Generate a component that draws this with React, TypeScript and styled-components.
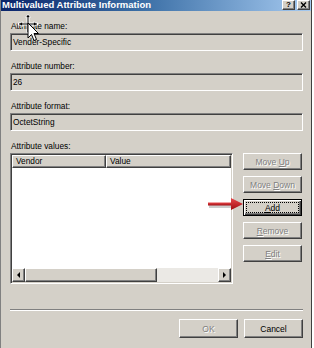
import styled, { createGlobalStyle, css } from "styled-components";

const GlobalStyle = createGlobalStyle`
  html, body {
    margin: 0;
    padding: 0;
    background: #fff;
    overflow: hidden;
  }
`;

const raised = css`
  border: 1px solid;
  border-color: #fff #404040 #404040 #fff;
  box-shadow: inset -1px -1px #808080;
`;

const sunken = css`
  border: 1px solid;
  border-color: #808080 #fff #fff #808080;
  box-shadow: inset 1px 1px #404040, inset -1px -1px #d4d0c8;
`;

const Window = styled.div`
  position: relative;
  width: 312px;
  height: 348px;
  box-sizing: border-box;
  background: #d4d0c8;
  border-left: 1px solid #808080;
  border-right: 1px solid #404040;
  display: flex;
  flex-direction: column;
  font-family: "Liberation Sans", Arial, sans-serif;
  font-size: 8.3px;
  color: #000;
`;

const TitleBar = styled.div`
  height: 11px;
  display: flex;
  align-items: flex-start;
  justify-content: space-between;
  background: linear-gradient(to right, #0a246a, #3a6ea5 45%, #a6caf0);
  padding: 0 1px 0 1px;
`;

const Title = styled.span`
  color: #fff;
  font-weight: bold;
  font-size: 9.5px;
  line-height: 10px;
  white-space: nowrap;
`;

const TitleButtons = styled.div`
  display: flex;
  gap: 2px;
`;

const TitleButton = styled.div`
  width: 13px;
  height: 10px;
  box-sizing: border-box;
  background: #d4d0c8;
  ${raised};
  display: flex;
  align-items: center;
  justify-content: center;
  font-weight: bold;
  font-size: 8px;
  line-height: 8px;
`;

const Body = styled.div`
  flex: 1;
  display: flex;
  flex-direction: column;
  padding: 10px 8px 0 9px;
`;

const Field = styled.div`
  display: flex;
  flex-direction: column;
  margin-bottom: 10px;
`;

const Label = styled.div`
  line-height: 10px;
  height: 10px;
  padding-left: 1px;
  margin-bottom: 2px;
  white-space: nowrap;
`;

const ReadOnlyBox = styled.div`
  height: 18px;
  box-sizing: border-box;
  ${sunken};
  padding-left: 2px;
  display: flex;
  align-items: center;
  background: #d4d0c8;
`;

const ValuesRow = styled.div`
  display: flex;
  gap: 10px;
  height: 131px;
`;

const ListView = styled.div`
  width: 223px;
  box-sizing: border-box;
  ${sunken};
  background: #fff;
  display: flex;
  flex-direction: column;
  padding: 1px;
`;

const ListHeader = styled.div`
  display: flex;
  height: 13px;
`;

const HeaderCell = styled.div<{ $width?: number }>`
  ${({ $width }) => ($width ? `width: ${$width}px;` : "flex: 1;")}
  box-sizing: border-box;
  background: #d4d0c8;
  ${raised};
  padding-left: 3px;
  line-height: 11px;
`;

const ListBody = styled.div`
  flex: 1;
  background: #fff;
`;

const ScrollBar = styled.div`
  height: 14px;
  display: flex;
  background: #ebe9e5;
`;

const ScrollButton = styled.div`
  width: 13px;
  box-sizing: border-box;
  background: #d4d0c8;
  ${raised};
  display: flex;
  align-items: center;
  justify-content: center;
`;

const Thumb = styled.div<{ $width: number }>`
  width: ${({ $width }) => $width}px;
  box-sizing: border-box;
  background: #d4d0c8;
  ${raised};
`;

const Track = styled.div`
  flex: 1;
`;

const Triangle = styled.div<{ $dir: "left" | "right" }>`
  width: 0;
  height: 0;
  border-top: 3px solid transparent;
  border-bottom: 3px solid transparent;
  ${({ $dir }) =>
    $dir === "left"
      ? "border-right: 3px solid #000;"
      : "border-left: 3px solid #000;"}
`;

const ButtonColumn = styled.div`
  width: 59px;
  display: flex;
  flex-direction: column;
  gap: 6px;
`;

const Button = styled.div<{ $disabled?: boolean; $default?: boolean; $height?: number }>`
  height: ${({ $height }) => $height ?? 17}px;
  width: 59px;
  box-sizing: border-box;
  background: #d4d0c8;
  display: flex;
  align-items: center;
  justify-content: center;
  font-size: 8.5px;
  white-space: pre;
  ${({ $default }) =>
    $default
      ? css`
          border: 1px solid #000;
          box-shadow: inset 1px 1px #fff, inset -1px -1px #404040,
            inset -2px -2px #808080;
          padding: 2px;
        `
      : raised};
  ${({ $disabled }) =>
    $disabled &&
    css`
      color: #808080;
      text-shadow: 1px 1px #fff;
    `}
`;

const Caption = styled.span`
  white-space: pre;
`;

const FocusRect = styled.span`
  flex: 1;
  align-self: stretch;
  display: flex;
  align-items: center;
  justify-content: center;
  border: 1px dotted #000;
`;

const Separator = styled.div`
  margin-top: 25px;
  border-top: 1px solid #808080;
  border-bottom: 1px solid #fff;
`;

const Footer = styled.div`
  display: flex;
  justify-content: flex-end;
  gap: 6px;
  margin-top: 8px;
`;

const Overlay = styled.svg<{ $left: number; $top: number }>`
  position: absolute;
  left: ${({ $left }) => $left}px;
  top: ${({ $top }) => $top}px;
  pointer-events: none;
`;

function MoveCursor() {
  return (
    <Overlay $left={15} $top={13} width="26" height="32" viewBox="0 0 26 32">
      <g stroke="#fff" strokeWidth="3" fill="none" strokeLinecap="round">
        <path d="M12 3 V19 M3 11 H21" />
      </g>
      <g fill="#000" stroke="#fff" strokeWidth="0.8">
        <polygon points="12,1 9.5,4.5 14.5,4.5" />
        <polygon points="3,11 6.5,8.5 6.5,13.5" />
        <polygon points="21,11 17.5,8.5 17.5,13.5" />
      </g>
      <path d="M12 3 V19 M3 11 H21" stroke="#000" strokeWidth="1" />
      <polygon
        points="12,10 12,25 15.5,21.5 18,27.5 20.5,26.5 18,20.5 22.5,20.5"
        fill="#fff"
        stroke="#000"
        strokeWidth="1"
        strokeLinejoin="round"
      />
    </Overlay>
  );
}

function RedArrow() {
  return (
    <Overlay $left={205} $top={196} width="40" height="17" viewBox="0 0 40 17">
      <defs>
        <linearGradient id="redShade" x1="0" y1="0" x2="0" y2="1">
          <stop offset="0" stopColor="#e8474a" />
          <stop offset="1" stopColor="#a10d12" />
        </linearGradient>
      </defs>
      <rect x="3" y="9" width="24" height="3" fill="#9a9a9a" opacity="0.5" />
      <rect x="2" y="6.5" width="25" height="3" fill="url(#redShade)" />
      <polygon points="25,2 37,8 25,14" fill="url(#redShade)" />
    </Overlay>
  );
}

function CloseGlyph() {
  return (
    <svg width="7" height="6" viewBox="0 0 7 6">
      <path d="M1 0.5 L6 5.5 M6 0.5 L1 5.5" stroke="#000" strokeWidth="1.4" />
    </svg>
  );
}

export default function App() {
  return (
    <>
      <GlobalStyle />
      <Window>
        <TitleBar>
          <Title>Multivalued Attribute Information</Title>
          <TitleButtons>
            <TitleButton>?</TitleButton>
            <TitleButton>
              <CloseGlyph />
            </TitleButton>
          </TitleButtons>
        </TitleBar>
        <Body>
          <Field>
            <Label>Attribute name:</Label>
            <ReadOnlyBox>Vender-Specific</ReadOnlyBox>
          </Field>
          <Field>
            <Label>Attribute number:</Label>
            <ReadOnlyBox>26</ReadOnlyBox>
          </Field>
          <Field>
            <Label>Attribute format:</Label>
            <ReadOnlyBox>OctetString</ReadOnlyBox>
          </Field>
          <Label>Attribute values:</Label>
          <ValuesRow>
            <ListView>
              <ListHeader>
                <HeaderCell $width={94}>Vendor</HeaderCell>
                <HeaderCell>Value</HeaderCell>
              </ListHeader>
              <ListBody />
              <ScrollBar>
                <ScrollButton>
                  <Triangle $dir="left" />
                </ScrollButton>
                <Thumb $width={132} />
                <Track />
                <ScrollButton>
                  <Triangle $dir="right" />
                </ScrollButton>
              </ScrollBar>
            </ListView>
            <ButtonColumn>
              <Button $disabled>
                <Caption>
                  Move <u>U</u>p
                </Caption>
              </Button>
              <Button $disabled>
                <Caption>
                  Move <u>D</u>own
                </Caption>
              </Button>
              <Button $default>
                <FocusRect>
                  <Caption>
                    <u>A</u>dd
                  </Caption>
                </FocusRect>
              </Button>
              <Button $disabled>
                <Caption>
                  <u>R</u>emove
                </Caption>
              </Button>
              <Button $disabled>
                <Caption>
                  <u>E</u>dit
                </Caption>
              </Button>
            </ButtonColumn>
          </ValuesRow>
          <Separator />
          <Footer>
            <Button $disabled $height={19}>
              <Caption>OK</Caption>
            </Button>
            <Button $height={19}>
              <Caption>Cancel</Caption>
            </Button>
          </Footer>
        </Body>
        <MoveCursor />
        <RedArrow />
      </Window>
    </>
  );
}
